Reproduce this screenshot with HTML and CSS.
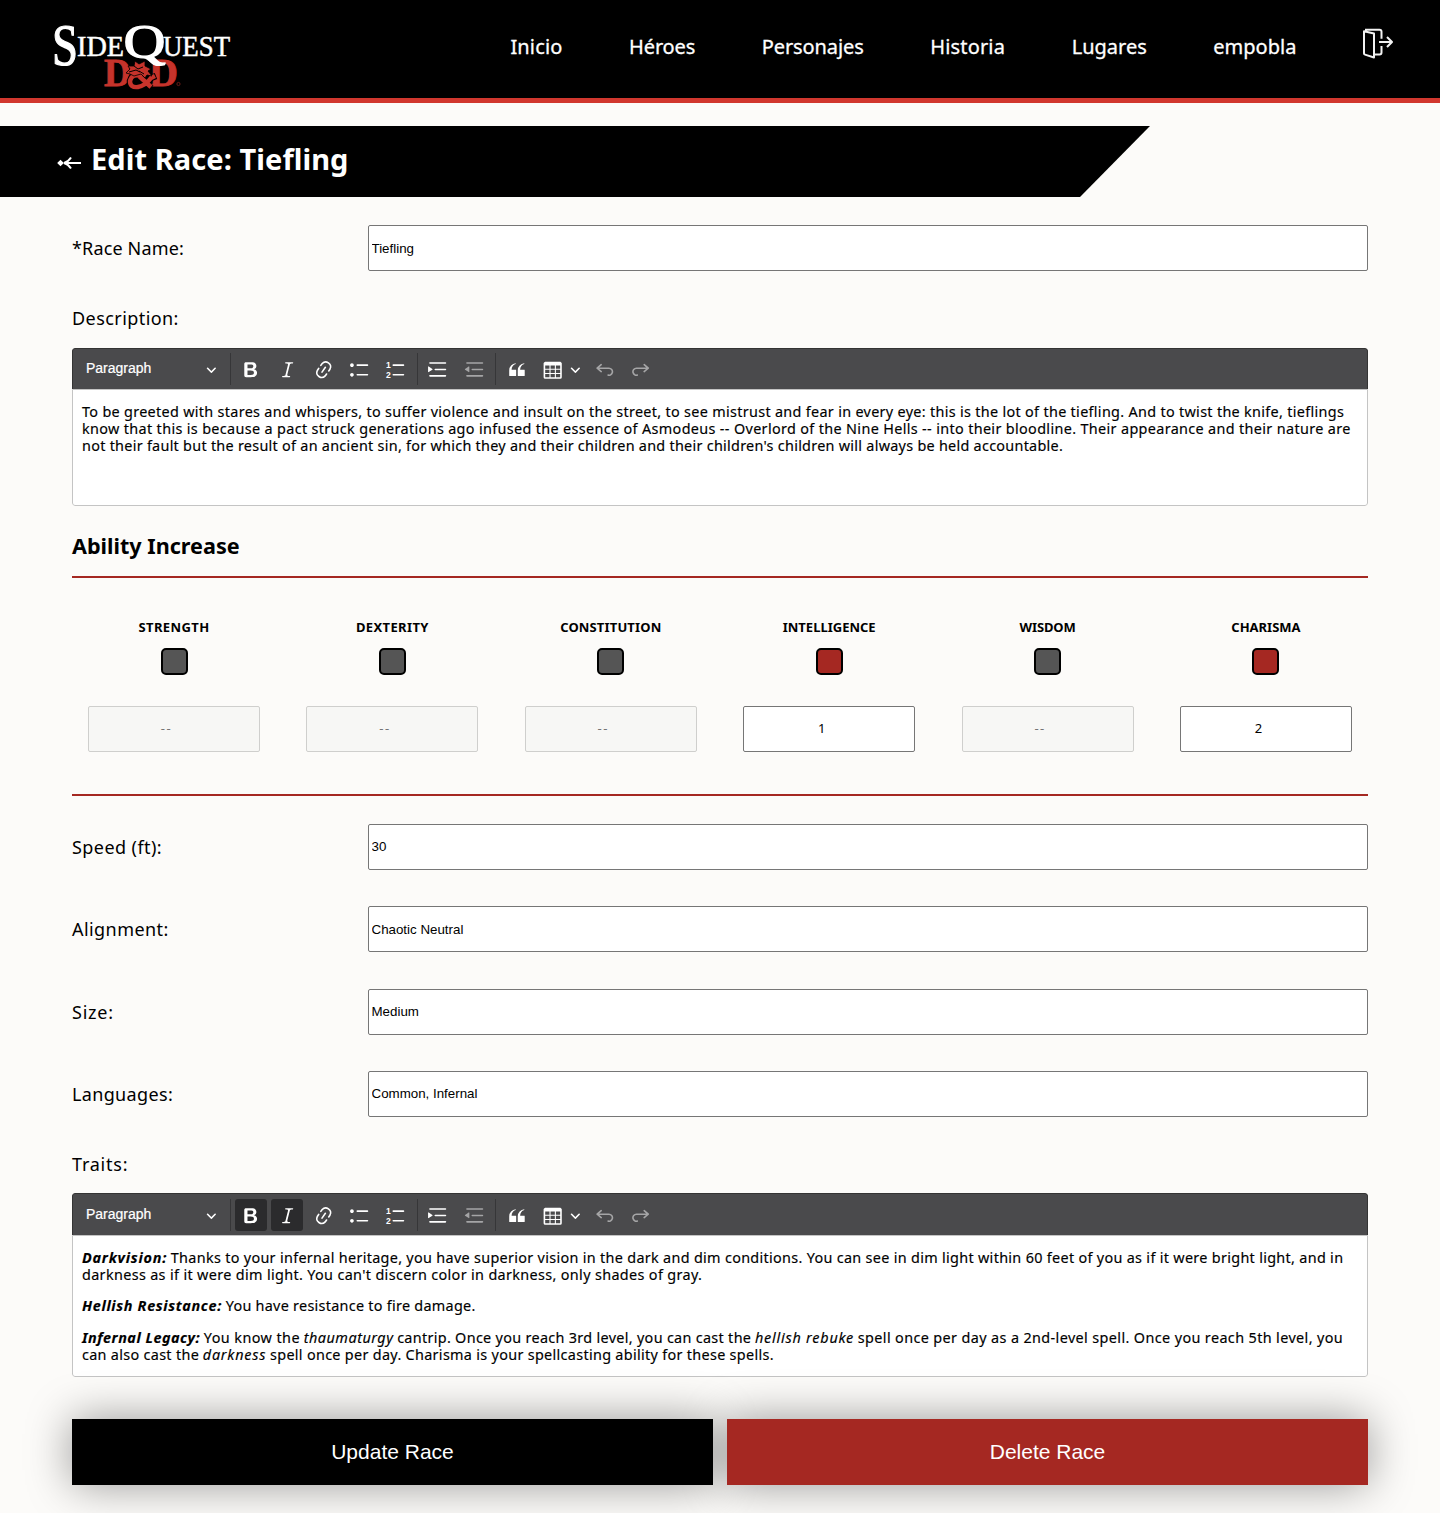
FILE: index.html
```html
<!DOCTYPE html>
<html lang="es">
<head>
<meta charset="utf-8">
<title>SideQuest</title>
<link rel="stylesheet" href="styles.css">
</head>
<body>
<svg class="defs" width="0" height="0" aria-hidden="true">
  <symbol id="bold" viewBox="0 0 20 20"><path d="M10.187 17H5.773c-.637 0-1.092-.138-1.364-.415-.273-.277-.409-.718-.409-1.323V4.738c0-.617.14-1.062.419-1.332.279-.27.73-.406 1.354-.406h4.68c.69 0 1.288.041 1.793.124.506.083.96.242 1.36.478.341.197.644.447.906.75a3.262 3.262 0 0 1 .808 2.162c0 1.401-.722 2.426-2.167 3.075C15.05 10.175 16 11.315 16 13.01a3.756 3.756 0 0 1-2.296 3.504 6.1 6.1 0 0 1-1.517.377c-.571.073-1.238.11-2 .11zm-.217-6.217H7v4.087h3.069c1.977 0 2.965-.69 2.965-2.072 0-.707-.256-1.22-.768-1.537-.512-.319-1.277-.478-2.296-.478zM7 5.13v3.619h2.606c.729 0 1.292-.067 1.69-.2a1.6 1.6 0 0 0 .91-.765c.165-.267.247-.566.247-.897 0-.707-.26-1.176-.778-1.409-.519-.232-1.31-.348-2.375-.348H7z"/></symbol>
  <symbol id="italic" viewBox="0 0 20 20"><path d="m9.586 14.633.021.004c-.036.335.095.655.393.962.082.083.173.15.274.201h1.474a.6.6 0 1 1 0 1.2H5.304a.6.6 0 0 1 0-1.2h1.15c.474-.07.809-.182 1.005-.334.157-.122.291-.32.404-.597l2.416-9.55a1.053 1.053 0 0 0-.281-.823 1.12 1.12 0 0 0-.442-.296H8.15a.6.6 0 0 1 0-1.2h6.443a.6.6 0 1 1 0 1.2h-1.195c-.376.056-.65.155-.823.296-.215.175-.423.439-.623.79l-2.366 9.347z"/></symbol>
  <symbol id="link" viewBox="0 0 20 20"><path d="m11.077 15 .991-1.416a.75.75 0 1 1 1.229.86l-1.148 1.64a.748.748 0 0 1-.217.206 5.251 5.251 0 0 1-8.503-5.955.741.741 0 0 1 .12-.274l1.147-1.639a.75.75 0 1 1 1.228.86L4.933 10.7l.006.003a3.75 3.75 0 0 0 6.132 4.294l.006.004zm5.494-5.335a.748.748 0 0 1-.12.274l-1.147 1.639a.75.75 0 1 1-1.228-.86l.86-1.23a3.75 3.75 0 0 0-6.144-4.301l-.86 1.229a.75.75 0 0 1-1.229-.86l1.148-1.64a.748.748 0 0 1 .217-.206 5.251 5.251 0 0 1 8.503 5.955zm-4.563-2.532a.75.75 0 0 1 .184 1.045l-3.155 4.505a.75.75 0 1 1-1.229-.86l3.155-4.506a.75.75 0 0 1 1.045-.184z"/></symbol>
  <symbol id="bullets" viewBox="0 0 20 20"><path d="M7 5.75c0 .414.336.75.75.75h9.5a.75.75 0 1 0 0-1.5h-9.5a.75.75 0 0 0-.75.75zm-6 0C1 4.784 1.777 4 2.75 4c.966 0 1.75.777 1.75 1.75 0 .966-.777 1.75-1.75 1.75C1.784 7.5 1 6.723 1 5.75zm6 9c0 .414.336.75.75.75h9.5a.75.75 0 1 0 0-1.5h-9.5a.75.75 0 0 0-.75.75zm-6 0c0-.966.777-1.75 1.75-1.75.966 0 1.75.777 1.75 1.75 0 .966-.777 1.75-1.75 1.75-.966 0-1.75-.777-1.75-1.75z"/></symbol>
  <symbol id="indent" viewBox="0 0 20 20"><path d="M2 3.75c0 .414.336.75.75.75h14.5a.75.75 0 1 0 0-1.5H2.75a.75.75 0 0 0-.75.75zm5 6c0 .414.336.75.75.75h9.5a.75.75 0 1 0 0-1.5h-9.5a.75.75 0 0 0-.75.75zM2.75 16.5h14.5a.75.75 0 1 0 0-1.5H2.75a.75.75 0 1 0 0 1.5zM1.632 6.95 5.02 9.358a.4.4 0 0 1-.013.661l-3.39 2.207A.4.4 0 0 1 1 11.892V7.275a.4.4 0 0 1 .632-.326z"/></symbol>
  <symbol id="outdent" viewBox="0 0 20 20"><path d="M2 3.75c0 .414.336.75.75.75h14.5a.75.75 0 1 0 0-1.5H2.75a.75.75 0 0 0-.75.75zm5 6c0 .414.336.75.75.75h9.5a.75.75 0 1 0 0-1.5h-9.5a.75.75 0 0 0-.75.75zM2.75 16.5h14.5a.75.75 0 1 0 0-1.5H2.75a.75.75 0 1 0 0 1.5zM4.368 6.95.98 9.358a.4.4 0 0 0 .013.661l3.39 2.207A.4.4 0 0 0 5 11.892V7.275a.4.4 0 0 0-.632-.326z"/></symbol>
  <symbol id="quote" viewBox="0 0 20 20"><path d="M3 10.423a6.5 6.5 0 0 1 6.056-6.408l.038.67C6.448 5.423 5.354 7.663 5.22 10H9c.552 0 .5.432.5.986v4.511c0 .554-.448.503-1 .503h-5c-.552 0-.5-.449-.5-1.003v-4.574zm8 0a6.5 6.5 0 0 1 6.056-6.408l.038.67c-2.646.739-3.74 2.979-3.873 5.315H17c.552 0 .5.432.5.986v4.511c0 .554-.448.503-1 .503h-5c-.552 0-.5-.449-.5-1.003v-4.574z"/></symbol>
  <symbol id="table" viewBox="0 0 20 20"><path d="M3 6v3h4V6H3zm0 4v3h4v-3H3zm0 4v3h4v-3H3zm5 3h4v-3H8v3zm5 0h4v-3h-4v3zm4-4v-3h-4v3h4zm0-4V6h-4v3h4zm1.500 8a1.500 1.500 0 0 1-1.500 1.500H3A1.500 1.500 0 0 1 1.500 17V4c.222-.863 1.068-1.500 2-1.500h13c.932 0 1.778.637 2 1.500v13zM12 13v-3H8v3h4zm0-4V6H8v3h4z"/></symbol>
  <symbol id="undo" viewBox="0 0 20 20"><path d="m5.042 9.367 2.189 1.837a.75.75 0 0 1-.965 1.149l-3.788-3.180a.747.747 0 0 1-.21-.284.75.75 0 0 1 .17-.945L6.230 4.762a.75.75 0 1 1 .964 1.150L4.863 7.866h8.917A.75.75 0 0 1 14 7.900a4 4 0 1 1-1.477 7.718l.344-1.489a2.500 2.500 0 1 0 1.094-4.730l.008-.032H5.042z"/></symbol>
  <symbol id="caret" viewBox="0 0 10 10"><path d="M.941 4.523a.75.75 0 1 1 1.060-1.060l3.006 3.005 3.005-3.005a.75.75 0 1 1 1.060 1.060l-3.549 3.550a.75.75 0 0 1-1.168-.136L.941 4.523z"/></symbol>
</svg>

<header class="header">
  <svg class="logo" width="190" height="80" viewBox="0 0 190 80" role="img" aria-label="SideQuest D&amp;D">
    <g class="logo-name">
      <text x="2" y="50" font-size="60" textLength="26" lengthAdjust="spacingAndGlyphs" class="cap">S</text>
      <text x="27" y="41" font-size="29" textLength="47" lengthAdjust="spacingAndGlyphs">IDE</text>
      <text x="113" y="41" font-size="29" textLength="67" lengthAdjust="spacingAndGlyphs">UEST</text>
    </g>
    <g class="logo-dnd">
      <text x="54" y="71" font-size="39" textLength="27" lengthAdjust="spacingAndGlyphs">D</text>
      <text x="99" y="71" font-size="39" textLength="29" lengthAdjust="spacingAndGlyphs">D</text>
      <circle class="reg" cx="128.500" cy="69" r="1.600"/>
      <path class="halo" d="M92 60q-10-2-12 6 0 8 8 7 7-1 13-10l5-2M89 60l12 13"/>
      <path class="limb" d="M92 61q-10-3-12 5 0 7 8 6 7-1 13-9l4-2M89 61l12 11"/>
      <path class="dragon" d="M76 58l4-4-2-3 6 0 1-5 4 3 6-3 0 5 6 3-3 2 4 5-5-1-2 3-4-4-7 2-4-2z"/>
      <path class="lines" d="M79 57l7-2 4 2M84 51l4 3 5-2M89 56l5 3"/>
    </g>
    <g class="logo-name"><text x="73.500" y="43" font-size="48" textLength="42" lengthAdjust="spacingAndGlyphs" class="cap">Q</text><path d="M93 42q7 4 10 7 5 3 13-1-7 1-10-3l-5-4z"/></g>
  </svg>
  <nav class="nav">
    <a class="w1">Inicio</a><a class="w2">Héroes</a><a class="w3">Personajes</a><a class="w1">Historia</a><a>Lugares</a><a>empobla</a>
    <svg class="exit" width="32" height="32" viewBox="0 0 32 32"><path d="M2 3.200 12 5.500v24L3 26.600Q2 26.300 2 25.500zM3 1.700h14.500q2 0 2 2v7M12 26.500h5.500q2 0 2-2v-6.500M17 14h13M25 9l5 5-5 5"/></svg>
  </nav>
</header>

<div class="banner">
  <svg class="back" width="25" height="14" viewBox="0 0 25 14"><path class="dot" d="M3.500 3.700 6.800 7 3.500 10.300.2 7z"/><path d="M7 7h17M14 1.500Q11 6 7 7q4 1 7 5.500"/></svg>
  <h1>Edit Race: Tiefling</h1>
</div>

<main class="form">
  <div class="row low"><label class="w1">*Race Name:</label><input value="Tiefling"></div>
  <div class="caption w6">Description:</div>
  <section class="editor">
    <div class="toolbar">
      <span class="heading">Paragraph<svg class="caret"><use href="#caret"/></svg></span><i class="sep"></i>
      <span class="btn"><svg><use href="#bold"/></svg></span><span class="btn"><svg><use href="#italic"/></svg></span><span class="btn"><svg><use href="#link"/></svg></span><span class="btn"><svg><use href="#bullets"/></svg></span><span class="btn"><svg viewBox="0 0 20 20"><path d="M7.750 5.750h9.500m-9.500 9h9.500" class="rule"/><text x="1" y="8" class="digit">1</text><text x="1" y="18" class="digit">2</text></svg></span><i class="sep"></i>
      <span class="btn"><svg><use href="#indent"/></svg></span><span class="btn off"><svg><use href="#outdent"/></svg></span><i class="sep"></i>
      <span class="btn"><svg><use href="#quote"/></svg></span><span class="btn"><svg><use href="#table"/></svg></span><svg class="caret split"><use href="#caret"/></svg><span class="btn off"><svg><use href="#undo"/></svg></span><span class="btn off flip"><svg><use href="#undo"/></svg></span>
    </div>
    <div class="content short">
      <p><span class="w3b">To be greeted with stares and whispers, to suffer violence and insult on the street, to see mistrust and fear in every eye: this is the lot of the tiefling. And to twist the knife, tieflings</span><br>
      <span class="w4">know that this is because a pact struck generations ago infused the essence of Asmodeus -- Overlord of the Nine Hells -- into their bloodline. Their appearance and their nature are</span><br>
      <span class="w5">not their fault but the result of an ancient sin, for which they and their children and their children's children will always be held accountable.</span></p>
    </div>
  </section>

  <h2>Ability Increase</h2>
  <section class="abilities">
    <div class="ability"><b class="w7">STRENGTH</b><i class="check"></i><input value="--" disabled></div>
    <div class="ability"><b class="w7">DEXTERITY</b><i class="check"></i><input value="--" disabled></div>
    <div class="ability"><b class="w1">CONSTITUTION</b><i class="check"></i><input value="--" disabled></div>
    <div class="ability"><b>INTELLIGENCE</b><i class="check on"></i><input value="1"></div>
    <div class="ability"><b class="w2">WISDOM</b><i class="check"></i><input value="--" disabled></div>
    <div class="ability"><b>CHARISMA</b><i class="check on"></i><input value="2"></div>
  </section>

  <div class="rows">
    <div class="row"><label class="w6">Speed (ft):</label><input value="30"></div>
    <div class="row low"><label class="w6">Alignment:</label><input value="Chaotic Neutral"></div>
    <div class="row"><label class="w8">Size:</label><input value="Medium"></div>
    <div class="row"><label class="w4">Languages:</label><input value="Common, Infernal"></div>
  </div>
  <div class="caption second w8">Traits:</div>
  <section class="editor">
    <div class="toolbar tall">
      <span class="heading">Paragraph<svg class="caret"><use href="#caret"/></svg></span><i class="sep"></i>
      <span class="btn active"><svg><use href="#bold"/></svg></span><span class="btn active"><svg><use href="#italic"/></svg></span><span class="btn"><svg><use href="#link"/></svg></span><span class="btn"><svg><use href="#bullets"/></svg></span><span class="btn"><svg viewBox="0 0 20 20"><path d="M7.750 5.750h9.500m-9.500 9h9.500" class="rule"/><text x="1" y="8" class="digit">1</text><text x="1" y="18" class="digit">2</text></svg></span><i class="sep"></i>
      <span class="btn"><svg><use href="#indent"/></svg></span><span class="btn off"><svg><use href="#outdent"/></svg></span><i class="sep"></i>
      <span class="btn"><svg><use href="#quote"/></svg></span><span class="btn"><svg><use href="#table"/></svg></span><svg class="caret split"><use href="#caret"/></svg><span class="btn off"><svg><use href="#undo"/></svg></span><span class="btn off flip"><svg><use href="#undo"/></svg></span>
    </div>
    <div class="content long">
      <p><b><em class="w8">Darkvision:</em></b> <span class="w3b">Thanks to your infernal heritage, you have superior vision in the dark and dim conditions. You can see in dim light within 60 feet of you as if it were bright light, and in</span><br>
      <span class="w4">darkness as if it were dim light. You can't discern color in darkness, only shades of gray.</span></p>
      <p><b><em class="w9">Hellish Resistance:</em></b> <span class="w5">You have resistance to fire damage.</span></p>
      <p><b><em class="w10">Infernal Legacy:</em></b> <span class="w6">You know the</span> <em class="w10">thaumaturgy</em> <span class="w3b">cantrip. Once you reach 3rd level, you can cast the</span> <em class="w8">hellish rebuke</em> <span class="w7">spell once per day as a 2nd-level spell. Once you reach 5th level, you</span><br>
      <span class="w3b">can also cast the</span> <em class="w8">darkness</em> <span class="w3b">spell once per day. Charisma is your spellcasting ability for these spells.</span></p>
    </div>
  </section>
  <div class="actions"><button class="update">Update Race</button><button class="delete">Delete Race</button></div>
</main>
</body>
</html>
```
FILE: styles.css
```css
* { box-sizing: border-box; }
body { margin: 0; background: #fcfbf9; color: #000; font-family: "Noto Sans", "Open Sans", sans-serif; overflow-x: hidden; }
.defs { display: block; }

/* tracking steps */
.w1 { letter-spacing: .15px; }
.w2 { letter-spacing: -.15px; }
.w3 { letter-spacing: -.09px; }
.w3b { letter-spacing: .312px; }
.w4 { letter-spacing: .346px; }
.w5 { letter-spacing: .275px; }
.w6 { letter-spacing: .43px; }
.w7 { letter-spacing: .38px; }
.w8 { letter-spacing: .77px; }
.w9 { letter-spacing: .66px; }
.w10 { letter-spacing: .5px; }

.header { display: flex; justify-content: space-between; height: 103px; padding: 0 44px 0 50px; background: #000; border-bottom: 5px solid #d1372e; }
.logo { margin-top: 15px; overflow: visible; }
.logo-name { fill: #fff; stroke: #fff; stroke-width: .5; font-family: "Liberation Serif", serif; }
.logo-name .cap { stroke-width: 1.200; }
.logo-dnd { fill: #c6332b; font-family: "Liberation Serif", serif; font-weight: bold; }
.logo-dnd text { stroke: #c6332b; stroke-width: .8; }
.logo-dnd .reg { fill: none; stroke: #7d211c; stroke-width: .8; }
.logo-dnd .halo { fill: none; stroke: #000; stroke-width: 6.500; }
.logo-dnd .limb { fill: none; stroke: #c6332b; stroke-width: 4.500; }
.logo-dnd .dragon { stroke: #000; stroke-width: .8; }
.logo-dnd .lines { fill: none; stroke: #000; stroke-width: 1; }
.nav { display: flex; gap: 66.600px; height: 92px; align-items: center; color: #fff; font-size: 20px; white-space: nowrap; -webkit-text-stroke: .3px #fff; }
.exit { margin: -4px 2px 0 -1px; fill: none; stroke: #f2f2f2; stroke-width: 2; stroke-linejoin: round; }
.banner { display: flex; align-items: center; gap: 9px; width: 1150px; height: 71px; margin-top: 23px; padding: 0 0 6px 57px; background: #000; color: #fff; clip-path: polygon(0 0, 100% 0, 1080px 100%, 0 100%); }
.back { margin-top: 8px; fill: none; stroke: #fff; stroke-width: 2; }
.back .dot { fill: #fff; stroke: none; }
h1 { margin: 0; font-size: 29px; line-height: 40px; letter-spacing: .07px; white-space: nowrap; }

.form { margin: 28px 72px 0; }
.row { display: grid; grid-template-columns: 296px 1000px; align-items: center; height: 46px; font-size: 18px; }
.row input { width: 100%; height: 46px; padding: 0 2.500px 1px; border: 1px solid #767676; border-radius: 2px; background: #fff; color: #000; font: 13.333px "Liberation Sans", Arial, sans-serif; }
.row.low input { padding: 1px 2.500px 0; }
.caption { height: 24px; line-height: 24px; font-size: 18px; margin: 35px 0 18px; }
.caption.second { margin-bottom: 17px; }

.editor { border-radius: 3px; overflow: hidden; }
.toolbar { display: flex; align-items: center; height: 41px; background: #4a4a4c; color: #fff; border: 1px solid #343434; border-bottom: 0; border-radius: 3px 3px 0 0; }
.toolbar.tall { height: 42px; padding-top: 1px; }
.heading { display: flex; align-items: center; justify-content: space-between; width: 144px; padding: 0 0 2px 13px; height: 32px; font: 14px "Liberation Sans", Arial, sans-serif; -webkit-text-stroke: .2px #fff; }
.caret { width: 10.700px; height: 10.700px; fill: #fff; }
.heading .caret { margin-top: 3px; }
.sep { width: 1px; height: 32px; background: #363638; margin: 0 4px 0 13px; }
.btn { display: flex; align-items: center; justify-content: center; width: 32.200px; height: 32px; margin-right: 4px; border-radius: 3px; }
.btn svg { width: 21.400px; height: 21.400px; margin-top: 1px; flex: none; fill: #fff; }
.btn + .sep { margin-left: 1px; }
.btn.active { background: #2b2b2d; }
.btn.off { opacity: .5; }
.btn.flip svg { transform: scaleX(-1); }
.split { margin: 0 8.500px 0 -3px; }
.digit { font: bold 8px "Liberation Sans", Arial, sans-serif; }
.rule { stroke: #fff; stroke-width: 1.500; stroke-linecap: round; }
.content { border: 1px solid #c4c4c4; border-radius: 0 0 3px 3px; background: #fff; padding: 13px 9px 0; font-size: 14.400px; line-height: 17px; white-space: nowrap; -webkit-text-stroke: .15px #000; }
.content.short { height: 117px; }
.content.long { height: 142px; }
.content p { margin: 0 0 14px; }
.content p + p { margin-bottom: 15px; }

h2 { margin: 24px 0 0; height: 48px; padding-bottom: 15px; font-size: 21.600px; line-height: 31px; border-bottom: 2px solid #a52822; }
.abilities { display: grid; grid-template-columns: repeat(6, 204px); gap: 14.400px; height: 218px; padding-top: 40px; border-bottom: 2px solid #a52822; }
.ability { display: flex; flex-direction: column; align-items: center; }
.ability b { font-size: 13px; line-height: 18px; }
.check { width: 27px; height: 27px; margin-top: 12px; border: 2px solid #000; border-radius: 5px; background: #555; }
.check.on { background: #a52822; }
.ability input { width: 172px; height: 46px; margin-top: 31px; padding: 0 17px 2px 2px; border: 1px solid #767676; border-radius: 2px; background: #fff; color: #000; text-align: center; font: 13px "Noto Sans", sans-serif; }
.ability input:disabled { background: #f7f7f5; border-color: #cfcfcd; color: #757575; letter-spacing: 1.500px; }
.rows { display: grid; gap: 36.400px; margin-top: 28px; }

.actions { display: grid; grid-template-columns: 641px 641px; gap: 14px; margin-top: 42px; padding-bottom: 28px; }
.actions button { height: 66px; border: 0; color: #fff; font: 21px "Liberation Sans", Arial, sans-serif; box-shadow: 0 0 45px rgba(0, 0, 0, .4); }
.update { background: #000; }
.delete { background: #a52822; }
```
